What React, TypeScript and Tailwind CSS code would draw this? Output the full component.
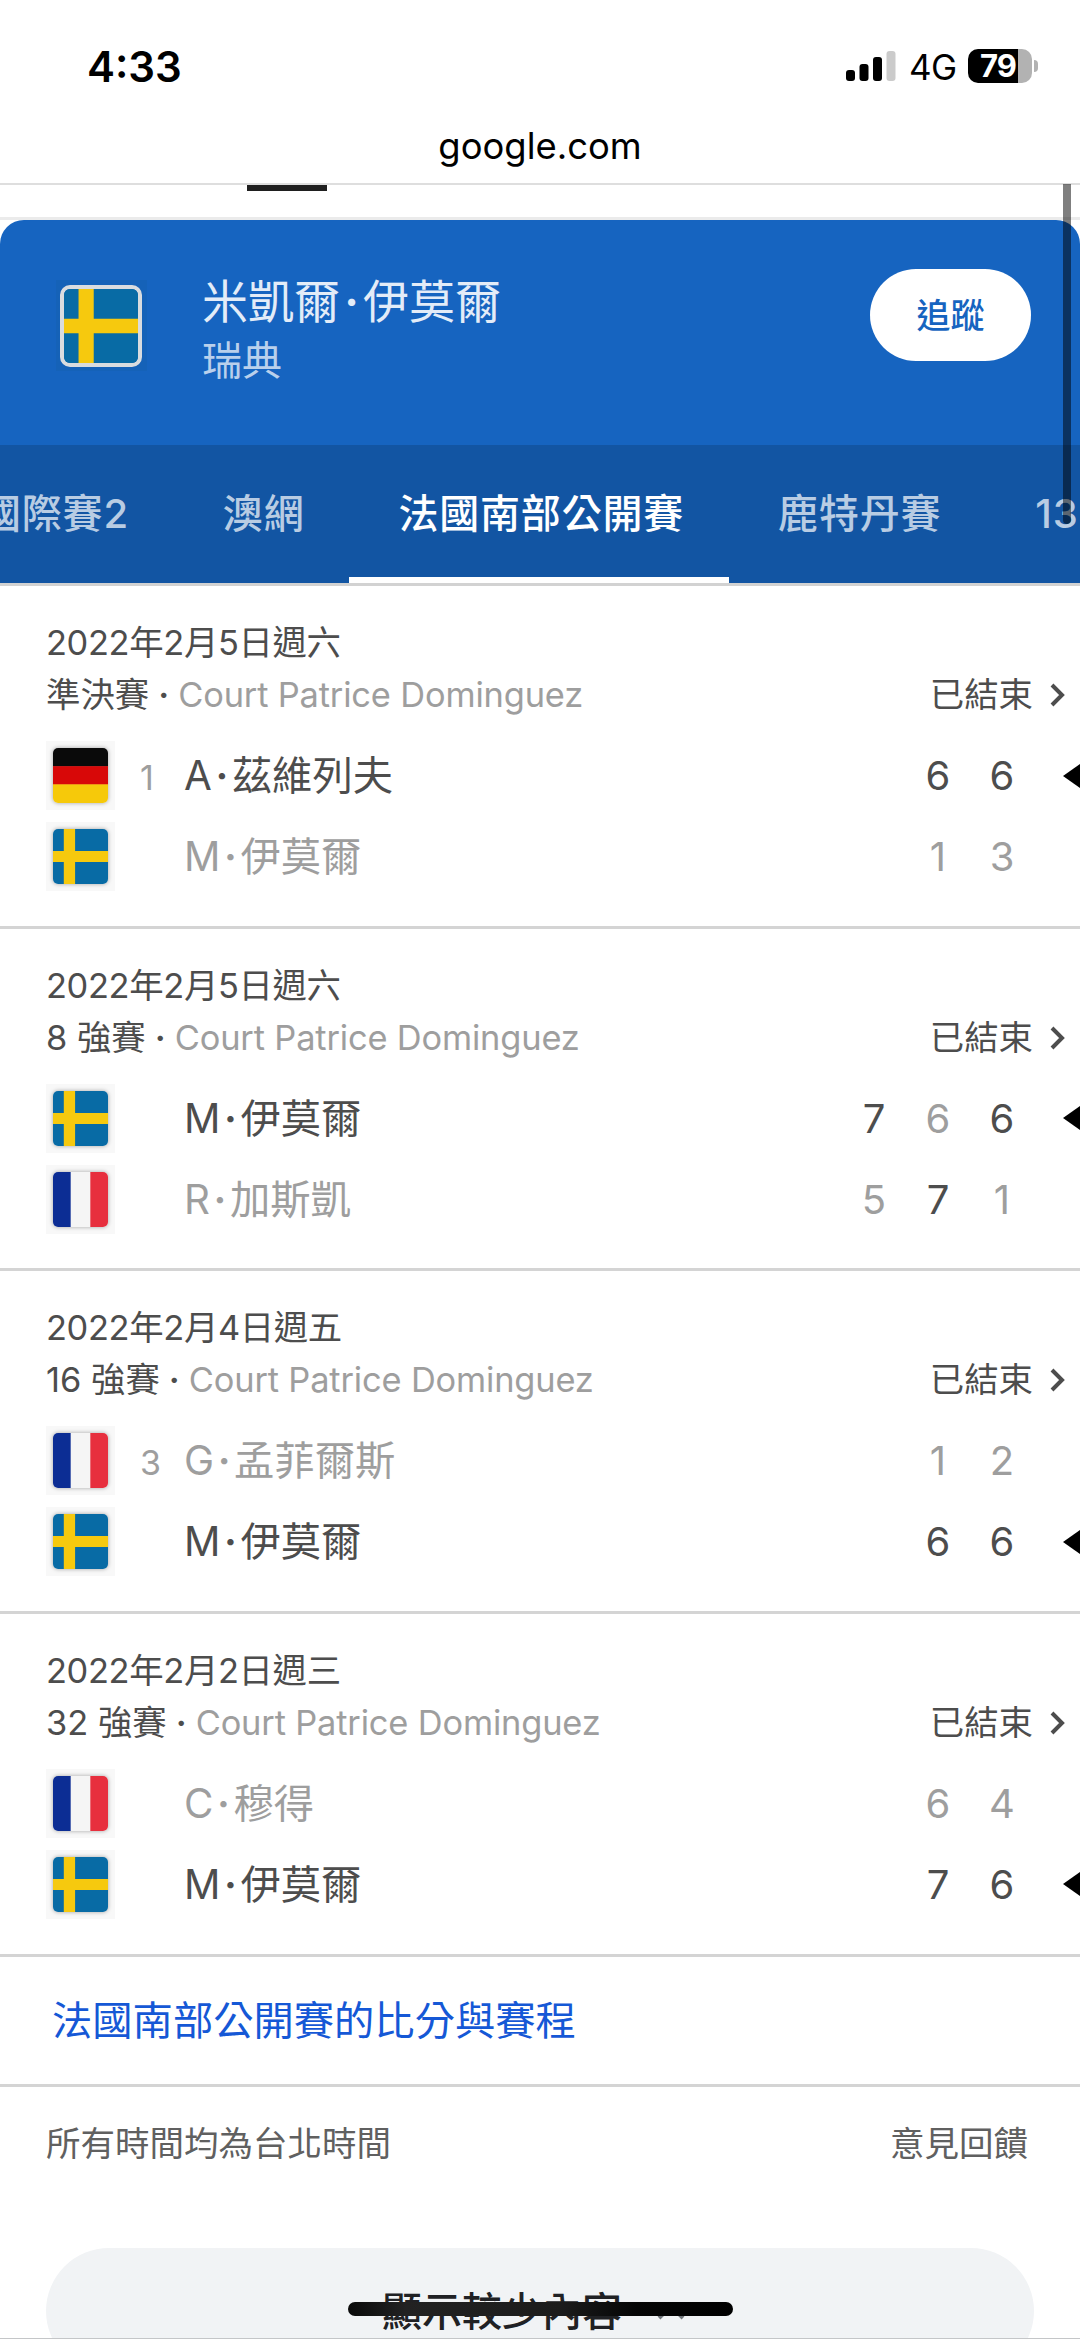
import { useState } from 'react';

type Country = 'se' | 'de' | 'fr';

type Player = {
  country: Country;
  seed?: string;
  initial: string;
  name: string;
  sets: string[];
  setsWon: boolean[];
  winner?: boolean;
};

type Match = {
  date: string;
  round: string;
  players: Player[];
};

const COURT = 'Court Patrice Dominguez';

const tabs = ['國際賽2', '澳網', '法國南部公開賽', '鹿特丹賽', '13-'];

const matches: Match[] = [
  {
    date: '2022年2月5日週六',
    round: '準決賽',
    players: [
      { country: 'de', seed: '1', initial: 'A', name: '茲維列夫', sets: ['6', '6'], setsWon: [true, true], winner: true },
      { country: 'se', initial: 'M', name: '伊莫爾', sets: ['1', '3'], setsWon: [false, false] },
    ],
  },
  {
    date: '2022年2月5日週六',
    round: '8 強賽',
    players: [
      { country: 'se', initial: 'M', name: '伊莫爾', sets: ['7', '6', '6'], setsWon: [true, false, true], winner: true },
      { country: 'fr', initial: 'R', name: '加斯凱', sets: ['5', '7', '1'], setsWon: [false, true, false] },
    ],
  },
  {
    date: '2022年2月4日週五',
    round: '16 強賽',
    players: [
      { country: 'fr', seed: '3', initial: 'G', name: '孟菲爾斯', sets: ['1', '2'], setsWon: [false, false] },
      { country: 'se', initial: 'M', name: '伊莫爾', sets: ['6', '6'], setsWon: [true, true], winner: true },
    ],
  },
  {
    date: '2022年2月2日週三',
    round: '32 強賽',
    players: [
      { country: 'fr', initial: 'C', name: '穆得', sets: ['6', '4'], setsWon: [false, false] },
      { country: 'se', initial: 'M', name: '伊莫爾', sets: ['7', '6'], setsWon: [true, true], winner: true },
    ],
  },
];

function Flag({ country }: { country: Country }) {
  return (
    <svg viewBox="0 0 56 56" preserveAspectRatio="none" className="block h-full w-full">
      {country === 'se' && (
        <>
          <rect width="56" height="56" fill="#086ba5" />
          <path d="M11 0h11.500v56H11zM0 22.500h56v11H0z" fill="#f6c90e" />
        </>
      )}
      {country === 'de' && (
        <>
          <rect width="56" height="19" fill="#0a0a0a" />
          <rect y="18.500" width="56" height="19" fill="#d80808" />
          <rect y="37" width="56" height="19" fill="#f6c90a" />
        </>
      )}
      {country === 'fr' && (
        <>
          <rect width="56" height="56" fill="#f5f5f5" />
          <rect width="18" height="56" fill="#0c2d94" />
          <rect x="38" width="18" height="56" fill="#e72f3e" />
        </>
      )}
    </svg>
  );
}

function StatusBar() {
  return (
    <div className="flex h-[132px] items-center justify-between pl-[87px] pr-[42px]">
      <span className="pt-[2px] text-[42px] font-semibold leading-[50px]">4:33</span>
      <div className="flex items-center">
        <svg width="50" height="30" viewBox="0 0 50 30">
          <rect x="0" y="19" width="9" height="11" rx="3" />
          <rect x="13.500" y="13" width="9" height="17" rx="3" />
          <rect x="27" y="6" width="9" height="24" rx="3" />
          <rect x="40.500" y="0" width="9" height="30" rx="3" fill="#cbcbcb" />
        </svg>
        <span className="ml-[13px] w-[59px] pt-[2px] text-[35px] leading-[40px] tracking-[-0.5px]">4G</span>
        <div className="flex h-[34px] w-[64px] items-center rounded-[10px] bg-[linear-gradient(90deg,#000_50px,#b2b2b2_50px)] pl-[12px]">
          <span className="text-[31px] font-bold leading-[34px] text-white tracking-[-1px]">79</span>
        </div>
        <div className="ml-[2px] h-[12px] w-[4px] rounded-r-full bg-[#b2b2b2]"></div>
      </div>
    </div>
  );
}

function PlayerRow({ player }: { player: Player }) {
  const color = player.winner ? 'text-[#4d4d4d]' : 'text-[#9e9e9e]';
  return (
    <div className="flex h-[81px] items-center">
      <div className="h-[69px] w-[69px] shrink-0 bg-[#f8f8f8] p-[7px]">
        <div className="h-[55px] w-[55px] overflow-hidden rounded-[5px] shadow-[0_0_4px_rgba(0,0,0,0.35)]">
          <Flag country={player.country} />
        </div>
      </div>
      <span className="w-[69px] pl-[25px] pt-[3px] text-[34px] text-[#9e9e9e]">{player.seed}</span>
      <div className={`flex flex-1 items-center pt-[1px] text-[40.300px] leading-[50px] ${color}`}>
        <span>{player.initial}</span>
        <span className="w-[20px] text-center font-semibold">·</span>
        <span>{player.name}</span>
      </div>
      <div className="flex pt-[1px] text-[40px] leading-[50px]">
        {player.sets.map((set, i) => (
          <span key={i} className={`w-[64px] text-center ${player.setsWon[i] ? 'text-[#4d4d4d]' : 'text-[#9e9e9e]'}`}>{set}</span>
        ))}
      </div>
      <div className="flex w-[46px] justify-end">
        {player.winner && (
          <svg width="17" height="24" viewBox="0 0 17 24">
            <path d="M0 12L17 0v24z" />
          </svg>
        )}
      </div>
    </div>
  );
}

function MatchCard({ match }: { match: Match }) {
  return (
    <div className="h-[342.670px] border-b-[3px] border-[#d4d4d4] pl-[46px] pt-[31px]">
      <div className="text-[34.400px] leading-[52px] tracking-[-0.350px] text-[#4d4d4d]">{match.date}</div>
      <div className="flex h-[52px] items-center text-[34.400px] leading-[52px] text-[#4d4d4d]">
        <span>{match.round}</span>
        <span className="w-[29px] text-center font-semibold">·</span>
        <span className="flex-1 tracking-[-0.150px] text-[#9e9e9e]">{COURT}</span>
        <span>已結束</span>
        <svg width="15" height="24" viewBox="0 0 15 24" className="ml-[17px] mr-[15px]" fill="none" stroke="#4d4d4d" strokeWidth="4">
          <path d="M2 2l10 10L2 22" />
        </svg>
      </div>
      <div className="pt-[14px]">
        {match.players.map((player, i) => (
          <PlayerRow key={i} player={player} />
        ))}
      </div>
    </div>
  );
}

export default function App() {
  const [activeTab, setActiveTab] = useState<number>(2);
  const [following, setFollowing] = useState<boolean>(false);

  return (
    <div className="relative h-[2339px] w-[1080px] overflow-hidden bg-white font-['Inter','Noto_Sans_CJK_TC',sans-serif] text-black">
      <StatusBar />
      <div className="flex h-[53px] items-center justify-center border-b-2 border-[#dedede] pb-[24px] text-[36.400px] leading-[40px]">google.com</div>

      <div className="h-[35px] border-b-[3px] border-[#ebebeb] pl-[247px]">
        <div className="h-[6px] w-[80px] bg-[#1f1f1f]"></div>
      </div>

      {/* Player header */}
      <div className="flex h-[225px] items-start rounded-t-[24px] bg-[#1664c0] pl-[56px] pr-[49px]">
        <div className="mt-[60px] h-[91px] w-[91px] bg-[#1562b8] px-[4px] py-[5px]">
          <div className="h-[82px] w-[82px] overflow-hidden rounded-[10px] border-4 border-[#d9dcdf]">
            <Flag country="se" />
          </div>
        </div>
        <div className="flex-1 pl-[55px] pt-[48px]">
          <div className="flex text-[46px] leading-[66px] text-[#e3ecf8]">
            <span>米凱爾</span>
            <span className="w-[23px] text-center font-semibold">·</span>
            <span>伊莫爾</span>
          </div>
          <div className="pt-[1px] text-[40px] leading-[52px] text-[#b9d0ec]">瑞典</div>
        </div>
        <button onClick={() => setFollowing(!following)} className="mt-[49px] h-[92px] w-[161px] rounded-full bg-white text-[34px] font-medium text-[#1664c0]">
          {following ? '追蹤中' : '追蹤'}
        </button>
      </div>

      {/* Tournament tabs, scrolled so the first and last are cut off */}
      <div className="flex h-[138px] w-[1400px] bg-[#1255a3]">
        {tabs.map((tab, i) => (
          <button
            key={tab}
            onClick={() => setActiveTab(i)}
            className={`shrink-0 border-b-[6px] pl-[49px] pr-[45px] pt-[6px] text-[40px] font-medium tracking-[0.800px] first:-ml-[68px] ${i === activeTab ? 'border-white text-white' : 'border-transparent text-[#b8cce3]'}`}
          >
            {tab}
          </button>
        ))}
      </div>
      <div className="h-[3px] bg-[#d2d2d2]"></div>

      {matches.map((match, i) => (
        <MatchCard key={i} match={match} />
      ))}

      <div className="flex h-[130px] items-center border-b-[3px] border-[#d4d4d4] pl-[52px] pt-[3px] text-[40.300px] text-[#1558d6]">法國南部公開賽的比分與賽程</div>

      <div className="flex h-[161px] justify-between pl-[46px] pr-[52px] pt-[31px] text-[34.500px] leading-[52px] text-[#606060]">
        <span>所有時間均為台北時間</span>
        <span>意見回饋</span>
      </div>

      <div className="mx-[46px] flex h-[126px] items-center rounded-full bg-[#f1f3f5] pl-[336px] pt-[2px] text-[40px] font-medium text-[#202124]">
        顯示較少內容
        <svg width="32" height="20" viewBox="0 0 32 20" className="ml-[33px]" fill="none" stroke="#70757a" strokeWidth="4">
          <path d="M4 16L16 4l12 12" />
        </svg>
      </div>

      {/* Scrollbar, home indicator and bottom edge float above the page */}
      <div className="absolute left-[1063px] top-[184px] h-[340px] w-[8px] rounded-b-full bg-black/50"></div>
      <div className="absolute left-[348px] top-[2302px] h-[14px] w-[385px] rounded-full bg-[linear-gradient(90deg,#0a0a0a,#222_15%,#1c1c1c_55%,#050505_75%,#000)]"></div>
      <div className="absolute bottom-0 left-0 h-px w-full bg-[#c4c6c8]"></div>
    </div>
  );
}
